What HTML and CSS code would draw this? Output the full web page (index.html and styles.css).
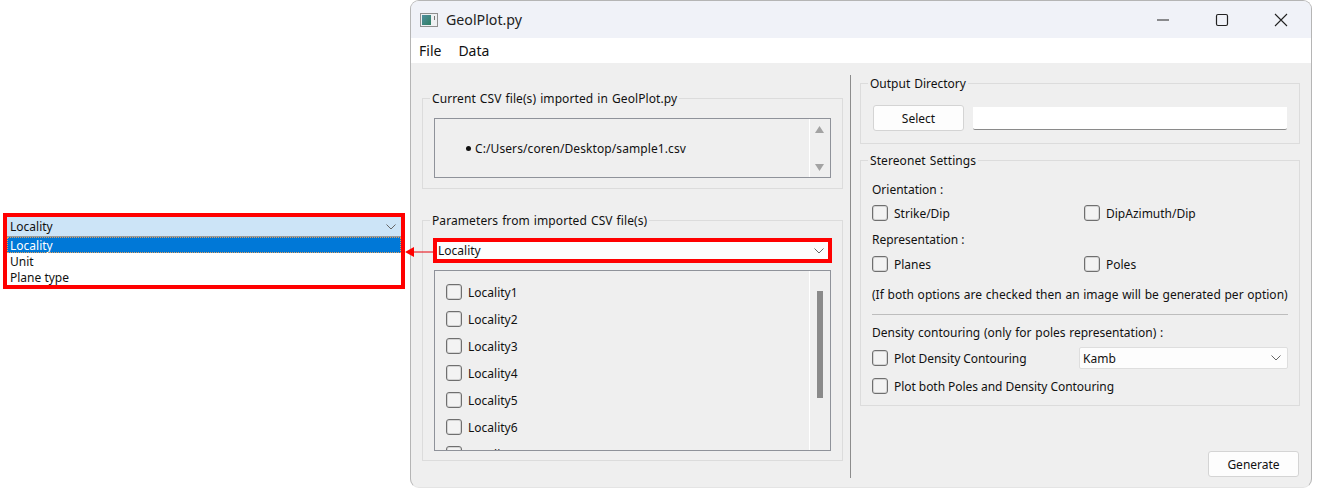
FILE: index.html
```html
<!DOCTYPE html>
<html lang="en">
<head>
  <meta charset="UTF-8">
  <meta name="viewport" content="width=device-width, initial-scale=1.0">
  <title>GeolPlot.py</title>
  <link rel="stylesheet" href="styles.css">
</head>
<body>
  <div class="callout">
    <div class="callout-head">
      <span>Locality</span>
      <svg class="chev" width="10" height="6" viewBox="0 0 10 6"><path d="M.5.5L5 5 9.5.5" fill="none" stroke="#666" stroke-width="1"/></svg>
    </div>
    <div class="callout-item selected">Locality</div>
    <div class="callout-item">Unit</div>
    <div class="callout-item">Plane type</div>
  </div>

  <div class="window">
    <div class="titlebar">
      <svg class="app-icon" width="18" height="14" viewBox="0 0 18 14">
        <defs><linearGradient id="appfill" x1="0" y1="0" x2="1" y2="1"><stop offset="0" stop-color="#4f8f9f"/><stop offset="1" stop-color="#2f7f62"/></linearGradient></defs>
        <rect x="0.5" y="0.5" width="17" height="13" fill="#eef0f2" stroke="#8f8f8f"/>
        <rect x="2" y="2" width="9" height="10" fill="url(#appfill)"/>
        <rect x="14" y="3" width="1" height="4" fill="#777"/>
      </svg>
      <span class="app-title">GeolPlot.py</span>
      <div class="win-controls">
        <svg width="14" height="14" viewBox="0 0 14 14"><path d="M1 7h12" stroke="#222" stroke-width="1"/></svg>
        <svg width="14" height="14" viewBox="0 0 14 14"><rect x="1.5" y="1.5" width="11" height="11" rx="1.5" fill="none" stroke="#222" stroke-width="1.2"/></svg>
        <svg width="14" height="14" viewBox="0 0 14 14"><path d="M1 1l12 12M13 1L1 13" stroke="#222" stroke-width="1.1"/></svg>
      </div>
    </div>
    <div class="menubar"><span>File</span><span>Data</span></div>

    <div class="content">
      <div class="col-left">
        <fieldset class="group group-files">
          <legend>Current CSV file(s) imported in GeolPlot.py</legend>
          <div class="group-body">
            <div class="box file-box">
              <div class="box-main file-line"><span class="bullet"></span>C:/Users/coren/Desktop/sample1.csv</div>
              <div class="scroll scroll-arrows">
                <svg width="9" height="7" viewBox="0 0 9 7"><path d="M4.5 0L9 7H0z" fill="#a3a3a3"/></svg>
                <svg width="9" height="7" viewBox="0 0 9 7"><path d="M0 0h9L4.5 7z" fill="#a3a3a3"/></svg>
              </div>
            </div>
          </div>
        </fieldset>

        <fieldset class="group group-params">
          <legend>Parameters from imported CSV file(s)</legend>
          <div class="group-body">
            <div class="combo combo-red">
              <span>Locality</span>
              <svg class="chev" width="10" height="6" viewBox="0 0 10 6"><path d="M.5.5L5 5 9.5.5" fill="none" stroke="#666" stroke-width="1"/></svg>
            </div>
            <div class="box list-box">
              <div class="box-main check-list">
                <label class="check"><i></i>Locality1</label>
                <label class="check"><i></i>Locality2</label>
                <label class="check"><i></i>Locality3</label>
                <label class="check"><i></i>Locality4</label>
                <label class="check"><i></i>Locality5</label>
                <label class="check"><i></i>Locality6</label>
                <label class="check"><i></i>Locality7</label>
              </div>
              <div class="scroll"><div class="thumb"></div></div>
            </div>
          </div>
        </fieldset>
      </div>

      <div class="vline"></div>

      <div class="col-right">
        <fieldset class="group group-output">
          <legend>Output Directory</legend>
          <div class="group-body output-row">
            <button class="btn">Select</button>
            <div class="path-input"></div>
          </div>
        </fieldset>

        <fieldset class="group group-stereo">
          <legend>Stereonet Settings</legend>
          <div class="group-body">
            <div class="sub-label first">Orientation :</div>
            <div class="opt-row">
              <label class="check"><i></i>Strike/Dip</label>
              <label class="check"><i></i>DipAzimuth/Dip</label>
            </div>
            <div class="sub-label">Representation :</div>
            <div class="opt-row">
              <label class="check"><i></i>Planes</label>
              <label class="check"><i></i>Poles</label>
            </div>
            <div class="note">(If both options are checked then an image will be generated per option)</div>
            <div class="hline"></div>
            <div class="sub-label density">Density contouring (only for poles representation) :</div>
            <div class="opt-row density-row">
              <label class="check"><i></i>Plot Density Contouring</label>
              <div class="combo combo-kamb">
                <span>Kamb</span>
                <svg class="chev" width="10" height="6" viewBox="0 0 10 6"><path d="M.5.5L5 5 9.5.5" fill="none" stroke="#666" stroke-width="1"/></svg>
              </div>
            </div>
            <div class="both-row">
              <label class="check"><i></i>Plot both Poles and Density Contouring</label>
            </div>
          </div>
        </fieldset>

        <div class="actions"><button class="btn">Generate</button></div>
      </div>
    </div>
  </div>

  <!-- arrow from the combo to the opened list -->
  <svg class="pointer" width="28" height="14" viewBox="0 0 28 14">
    <path d="M8 7h20" stroke="#e8000b" stroke-width="1"/>
    <path d="M0 7l9-5v10z" fill="#f00"/>
  </svg>
</body>
</html>
```

FILE: styles.css
```css
* {
  box-sizing: border-box;
}
html, body {
  margin: 0;
  height: 494px;
  overflow: hidden;
}
body {
  position: relative;
  display: flex;
  align-items: flex-start;
  background: #fff;
  font-family: "Noto Sans", "Open Sans", Arial, sans-serif;
  font-size: 12px;
  color: #111;
}

/* left call-out */
.callout {
  width: 402px;
  height: 76px;
  margin: 213px 0 0 3px;
  border: 4px solid #f00;
  background: #fff;
}
.callout-head {
  display: flex;
  align-items: center;
  justify-content: space-between;
  height: 20px;
  padding: 0 5px 0 3px;
  background: #cce4f7;
  border-bottom: 1px solid #9a9a9a;
}
.callout-item {
  height: 16px;
  line-height: 17px;
  padding-left: 3px;
}
.callout-item.selected {
  background: #0078d7;
  color: #fff;
  outline: 1px dotted #e0a060;
  outline-offset: -1px;
}
.callout-item + .callout-item {
  line-height: 18px;
}

/* window */
.window {
  width: 902px;
  height: 488px;
  margin-left: 5px;
  border: 1px solid #b5b5b5;
  border-bottom-color: #e4e4e4;
  border-radius: 9px;
  background: #efefef;
  overflow: hidden;
}
.titlebar {
  display: flex;
  align-items: center;
  height: 37px;
  padding-left: 9px;
  background: #f0f2f8;
}
.app-icon {
  margin-right: 8px;
}
.app-title {
  font-size: 14.2px;
  color: #222;
}
.win-controls {
  display: flex;
  gap: 45px;
  margin-left: auto;
  margin-right: 23px;
}
.menubar {
  display: flex;
  gap: 17px;
  align-items: center;
  height: 25px;
  padding-left: 8px;
  background: #fff;
  font-size: 14px;
}
.content {
  display: flex;
  height: 425px;
}
.col-left {
  width: 421px;
  margin-left: 11px;
  padding-top: 26px;
}
.vline {
  width: 1px;
  height: 403px;
  margin: 12px 9px 0 7px;
  background: #8c8c8c;
}
.col-right {
  width: 440px;
  padding-top: 11px;
}

/* group boxes */
.group {
  margin: 0;
  padding: 0;
  min-width: 0;
  border: 1px solid #dcdcdc;
}
.group legend {
  margin-left: 7px;
  padding: 2px 2px 0;
  line-height: 16px;
  word-spacing: 0.8px;
  color: #111;
}
.col-left .group legend, .group-stereo legend {
  letter-spacing: 0.09px;
}
.group-files {
  height: 100px;
}
.group-files .group-body {
  padding: 11px 11px 0;
}
.group-params {
  height: 250px;
  margin-top: 22px;
}
.group-params .group-body {
  padding: 9px 10px 0;
}
.group-output {
  height: 70px;
}
.output-row {
  display: flex;
  align-items: center;
  gap: 9px;
  padding: 13px 12px 0;
}
.group-stereo {
  height: 255px;
  margin-top: 7px;
}
.group-stereo .group-body {
  padding: 0 11px;
}

/* boxed scroll panes */
.box {
  display: flex;
  border: 1px solid #8f929a;
  overflow: hidden;
}
.box-main {
  flex: 1;
}
.file-box {
  height: 60px;
}
.list-box {
  height: 181px;
  margin: 7px 1px 0;
}
.scroll {
  width: 21px;
  border-left: 1px solid #fff;
}
.scroll-arrows {
  display: flex;
  flex-direction: column;
  align-items: center;
  justify-content: space-between;
  padding: 7px 2px 6px 0;
}
.thumb {
  width: 6px;
  height: 107px;
  margin: 20px 0 0 7px;
  background: #8a8a8a;
}
.file-line {
  display: flex;
  align-items: center;
  padding-left: 31px;
  letter-spacing: 0.09px;
}
.bullet {
  width: 5px;
  height: 5px;
  margin-right: 4px;
  border-radius: 50%;
  background: #111;
}
.check-list {
  display: flex;
  flex-direction: column;
  gap: 11px;
  padding: 13px 0 0 11px;
}

/* checkboxes */
.check {
  display: flex;
  align-items: center;
  gap: 6px;
  height: 16px;
}
.check i {
  flex: none;
  width: 16px;
  height: 16px;
  border: 1px solid #6f6f6f;
  border-radius: 3px;
  background: #f3f3f3;
  box-shadow: inset 0 0 0 1px rgba(120, 120, 120, 0.25);
}

/* combos */
.combo {
  display: flex;
  align-items: center;
  justify-content: space-between;
  background: #fdfdfd;
}
.combo-red {
  height: 25px;
  padding: 0 4px 0 1px;
  border: 4px solid #f00;
}
.combo-kamb {
  width: 209px;
  height: 22px;
  margin-left: -5px;
  padding: 0 6px 0 3px;
  border: 1px solid #dedede;
  border-radius: 2px;
}

/* buttons and path field */
.btn {
  width: 91px;
  height: 26px;
  padding: 0;
  border: 1px solid #d4d4d4;
  border-radius: 3px;
  background: #fdfdfd;
  font: inherit;
  color: #111;
}
.path-input {
  width: 314px;
  height: 23px;
  background: #fff;
  border-bottom: 1px solid #8a8a8a;
  border-radius: 0 0 2px 2px;
}

/* stereonet rows */
.sub-label {
  height: 16px;
  line-height: 16px;
  margin-top: 11px;
}
.sub-label.first {
  margin-top: 13px;
}
.opt-row {
  display: grid;
  grid-template-columns: 212px 1fr;
  align-items: center;
  margin-top: 7px;
}
.opt-row + .sub-label + .opt-row {
  margin-top: 8px;
}
.note {
  height: 16px;
  line-height: 16px;
  margin-top: 15px;
  word-spacing: 0.6px;
}
.hline {
  height: 1px;
  margin-top: 11px;
  background: #bdbdbd;
}
.sub-label.density {
  margin-top: 10px;
  word-spacing: 0.6px;
}
.density-row {
  height: 22px;
  margin-top: 6px;
}
.density-row .check {
  letter-spacing: -0.09px;
}
.both-row {
  margin-top: 9px;
  letter-spacing: -0.05px;
}
.actions {
  display: flex;
  justify-content: flex-end;
  margin: 45px 1px 0 0;
}

/* red arrow over the two panels */
.pointer {
  position: absolute;
  left: 405px;
  top: 245px;
}
```
